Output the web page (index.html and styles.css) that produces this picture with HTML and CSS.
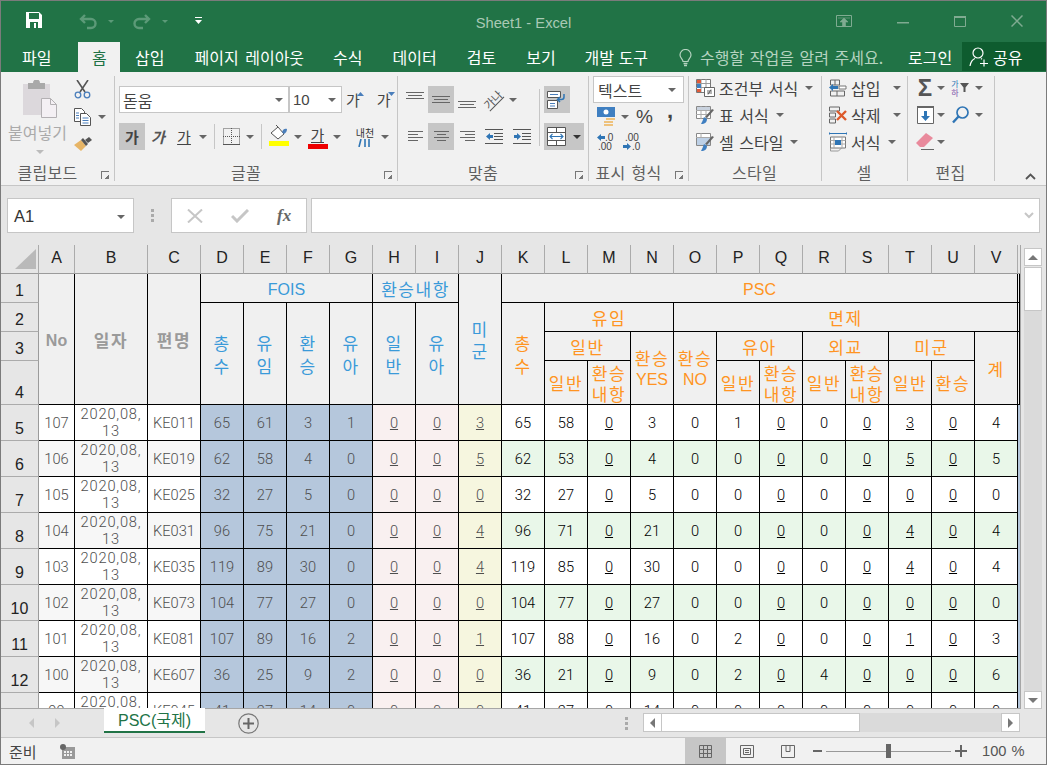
FILE: index.html
```html
<!DOCTYPE html>
<html>
  <head>
    <title>Sheet1 - Excel</title>
    <meta http-equiv="Content-Type" content="text/html; charset=UTF-8"/>
    <link rel="stylesheet" href="styles.css">
  </head>
  <body>
    <div class="window">

      <!-- title bar -->
      <div class="titlebar">
        <div class="qat">
          <svg class="ic-save" width="16" height="16" viewBox="0 0 16 16"><path d="M0 0h13l3 3v13H0z" fill="#fff"/><rect x="3" y="1" width="10" height="6" fill="#217346"/><rect x="4" y="10" width="8" height="6" fill="#217346"/><rect x="8" y="11" width="2" height="5" fill="#fff"/></svg>
          <svg class="ic-undo" width="18" height="16" viewBox="0 0 18 16"><path d="M6 1 2 5l4 4M2 5h10a4.5 4.5 0 0 1 0 9H8" fill="none" stroke="#5c9a78" stroke-width="2.4"/></svg>
          <i class="caret caret-qat"></i>
          <svg class="ic-redo" width="18" height="16" viewBox="0 0 18 16"><path d="M12 1l4 4-4 4M16 5H6a4.5 4.5 0 0 0 0 9h4" fill="none" stroke="#5c9a78" stroke-width="2.4"/></svg>
          <i class="caret caret-qat"></i>
          <svg class="ic-custom" width="7" height="7" viewBox="0 0 7 7"><path d="M0 0h7v1H0zM0 3h7L3.500 7z" fill="#fff"/></svg>
        </div>
        <div class="doc-title">Sheet1 - Excel</div>
        <div class="winbtns">
          <svg width="16" height="12" viewBox="0 0 16 12"><path d="M.5.500h15v11H.500z" fill="none" stroke="#7fab91"/><path d="M2 3h12M8 3l-4 4h2.500v4h3V7H12z" fill="#7fab91" stroke="#7fab91" stroke-width=".6"/></svg>
          <svg width="12" height="12" viewBox="0 0 12 12"><path d="M0 7h12v1.500H0z" fill="#7fab91"/></svg>
          <svg width="12" height="12" viewBox="0 0 12 12"><path d="M.5 1.500h11v10H.500z" fill="none" stroke="#7fab91"/><path d="M0 1h12v2H0z" fill="#7fab91"/></svg>
          <svg width="12" height="12" viewBox="0 0 12 12"><path d="M.5.500l11 11M11.500.500l-11 11" stroke="#7fab91" stroke-width="1.500"/></svg>
        </div>
      </div>

      <!-- ribbon tabs -->
      <div class="tabs">
        <div class="tab tab-file">파일</div>
        <div class="tab active">홈</div>
        <div class="tab">삽입</div>
        <div class="tab">페이지 레이아웃</div>
        <div class="tab tab-tight">수식</div>
        <div class="tab">데이터</div>
        <div class="tab">검토</div>
        <div class="tab">보기</div>
        <div class="tab tab-tight tab-dev">개발 도구</div>
        <svg class="bulb" width="13" height="18" viewBox="0 0 13 18"><path d="M4 12.500C4 10 1 9 1 6a5.500 5.500 0 0 1 11 0c0 3-3 4-3 6.500z" fill="none" stroke="#b5d3c0" stroke-width="1.200"/><path d="M4.500 14.500h4M5 16.500h3" stroke="#b5d3c0" stroke-width="1.400"/></svg>
        <div class="tellme">수행할 작업을 알려 주세요.</div>
        <div class="login">로그인</div>
        <div class="share">
          <svg width="20" height="20" viewBox="0 0 20 20"><circle cx="9" cy="6" r="5" fill="none" stroke="#fff" stroke-width="1.200"/><path d="M1 19c.5-4 3-7 5-7.500M12 11.500l1 .8M11 16.500h8M15 12.500v7" fill="none" stroke="#fff" stroke-width="1.200"/></svg>
          <span>공유</span>
        </div>
      </div>

      <!-- ribbon -->
      <div class="ribbon">

        <div class="group g-clip">
          <div class="g-body flex">
            <div class="paste">
              <svg width="34" height="38" viewBox="0 0 34 38"><path d="M0 4h27v31H0z" fill="#dcd8dc"/><path d="M5 3h5a3.500 3.500 0 0 1 7 0h5v6H5z" fill="#a9a9a9"/><path d="M18.500 18.500h9l6 6v13h-15z" fill="#f4f0f4" stroke="#b3b0b3"/><path d="M27.500 18.500v6h6" fill="none" stroke="#b3b0b3"/></svg>
              <div class="paste-label">붙여넣기</div>
              <i class="caret caret-dim"></i>
            </div>
            <div class="col-small">
              <div class="row">
                <svg width="17" height="19" viewBox="0 0 17 19"><path d="M3 0l8 12M14 0L6 12" stroke="#555" stroke-width="1.600"/><circle cx="4" cy="15" r="2.800" fill="none" stroke="#4a7ebb" stroke-width="1.300"/><circle cx="13" cy="15" r="2.800" fill="none" stroke="#4a7ebb" stroke-width="1.300"/></svg>
              </div>
              <div class="row">
                <svg width="17" height="18" viewBox="0 0 17 18"><path d="M.5.500h7l3 3v10H.500z" fill="#fff" stroke="#555"/><path d="M6.500 5.500h6l4 4v8h-10z" fill="#fff" stroke="#555"/><path d="M2 5h3M2 7.500h3M2 10h3M8.500 10h6M8.500 12.500h6M8.500 15h6" stroke="#4a7ebb"/></svg>
                <i class="caret caret-copy"></i>
              </div>
              <div class="row">
                <svg width="18" height="14" viewBox="0 0 18 14"><path d="M0 8l7-5 5 6-5 5z" fill="#e7b566"/><path d="M7 3l5 6 2-2-5-6z" fill="#555"/><path d="M11 3l4-3 3 3-4 3z" fill="#555"/></svg>
              </div>
            </div>
          </div>
          <div class="g-label g-label-l">클립보드</div>
          <i class="launcher"></i>
        </div>

        <div class="group g-font">
          <div class="g-body g-pad">
            <div class="row">
              <div class="select sel-font"><span>돋움</span><i class="caret"></i></div>
              <div class="select sel-size"><span>10</span><i class="caret"></i></div>
              <div class="grow grow-up">가<svg width="7" height="4" viewBox="0 0 7 4"><path d="M0 4 3.500 0 7 4z" fill="#4a7ebb"/></svg></div>
              <div class="grow grow-down">가<svg width="7" height="4" viewBox="0 0 7 4"><path d="M0 0h7L3.500 4z" fill="#4a7ebb"/></svg></div>
            </div>
            <div class="row">
              <div class="btn w26 on ko"><b>가</b></div>
              <div class="btn w26 ko"><b class="ital">가</b></div>
              <div class="btn w26 ko"><u>가</u></div>
              <div class="drop"><i class="caret"></i></div>
              <div class="vsep-box"><i class="vsep"></i></div>
              <div class="btn w25">
                <svg width="17" height="17" viewBox="0 0 17 17"><path d="M.5.500h16v16H.500z" fill="none" stroke="#555" stroke-dasharray="1 1"/><path d="M8.500 0v17M0 8.500h17" stroke="#555" stroke-dasharray="1 1"/><path d="M0 16.500h17" stroke="#555"/></svg>
              </div>
              <div class="drop"><i class="caret"></i></div>
              <div class="vsep-box"><i class="vsep"></i></div>
              <div class="btn w26 stack">
                <svg width="20" height="15" viewBox="0 0 20 15"><path d="M2 8l7-6 6 7-6 5z" fill="#fff" stroke="#555"/><path d="M9 2 7 0" stroke="#555"/><path d="M15 9c2-1 3-3 3-5-2-1-4 0-5 3z" fill="#4a7ebb"/></svg>
                <i class="bar bar-y"></i>
              </div>
              <div class="drop"><i class="caret"></i></div>
              <div class="btn w27 stack ko"><u class="nou">가</u><i class="bar bar-r"></i></div>
              <div class="drop"><i class="caret"></i></div>
              <div class="btn w28 nc">
                <span>내천</span>
                <svg width="14" height="8" viewBox="0 0 14 8"><path d="M3 0 1 8M7 0v8M11 0v8" stroke="#2f75b5" stroke-width="1.600"/></svg>
              </div>
              <div class="drop"><i class="caret"></i></div>
            </div>
          </div>
          <div class="g-label g-label-l">글꼴</div>
          <i class="launcher"></i>
        </div>

        <div class="group g-align">
          <div class="g-body g-pad g-pad-a">
            <div class="row">
              <div class="btn w26"><svg width="18" height="18" viewBox="0 0 18 18"><path d="M0 1.500h18M2 4.500h14M0 7.500h18" stroke="#666"/></svg></div>
              <div class="btn w26 on"><svg width="18" height="18" viewBox="0 0 18 18"><path d="M0 5.500h18M2 8.500h14M0 11.500h18" stroke="#666"/></svg></div>
              <div class="btn w26"><svg width="18" height="18" viewBox="0 0 18 18"><path d="M0 10.500h18M2 13.500h14M0 16.500h18" stroke="#666"/></svg></div>
              <div class="btn w27"><span class="orient">가나</span></div>
              <div class="drop"><i class="caret"></i></div>
              <i class="vsep sep-wrap"></i>
              <div class="btn w26 on">
                <svg width="20" height="18" viewBox="0 0 20 18"><path d="M.5.500h13v6h-13zM.5 9.500h10v8H.500z" fill="#fff" stroke="#555"/><path d="M3 3.500h8M3 12.500h5M3 15h5" stroke="#4a7ebb"/><path d="M17 3v3a2.500 2.500 0 0 1-2.500 2.500H11M13 6l-2.500 2.500L13 11" fill="none" stroke="#2f75b5" stroke-width="1.500"/></svg>
              </div>
            </div>
            <div class="row">
              <div class="btn w26"><svg width="15" height="11" viewBox="0 0 15 11"><path d="M0 .5h15M0 3.500h10M0 6.500h15M0 9.500h10" stroke="#666"/></svg></div>
              <div class="btn w26 on"><svg width="15" height="11" viewBox="0 0 15 11"><path d="M0 .5h15M3 3.500h9M0 6.500h15M3 9.500h9" stroke="#666"/></svg></div>
              <div class="btn w26"><svg width="15" height="11" viewBox="0 0 15 11"><path d="M0 .5h15M5 3.500h10M0 6.500h15M5 9.500h10" stroke="#666"/></svg></div>
              <div class="btn w28"><svg width="18" height="15" viewBox="0 0 18 15"><path d="M0 .5h18M9 4.500h9M9 7.500h9M9 10.500h9M0 14.500h18" stroke="#555"/><path d="M1 7.500 5 4v2h3v3H5v2z" fill="#2f75b5"/></svg></div>
              <div class="btn w28"><svg width="18" height="15" viewBox="0 0 18 15"><path d="M0 .5h18M9 4.500h9M9 7.500h9M9 10.500h9M0 14.500h18" stroke="#555"/><path d="M8 7.500 4 4v2H1v3h3v2z" fill="#2f75b5"/></svg></div>
              <i class="vsep sep-merge"></i>
              <div class="btn w40 on merge">
                <svg width="19" height="19" viewBox="0 0 19 19"><path d="M.5.500h18v18H.500z" fill="#fff" stroke="#555"/><path d="M0 5.500h19M0 13.500h19M9.500 0v5M9.500 14v5" stroke="#555"/><path d="M3 9.500h13M5.500 7 3 9.500 5.500 12M13.500 7 16 9.500 13.500 12" fill="none" stroke="#2f75b5" stroke-width="1.100"/></svg>
                <i class="caret caret-dark"></i>
              </div>
            </div>
          </div>
          <div class="g-label g-label-l">맞춤</div>
          <i class="launcher"></i>
        </div>

        <div class="group g-num">
          <div class="g-body">
            <div class="select sel-num"><span>텍스트</span><i class="caret"></i></div>
            <div class="row">
              <div class="btn w26">
                <svg width="19" height="20" viewBox="0 0 19 20"><path d="M0 0h18v10H0z" fill="#3f7fc1"/><circle cx="9" cy="5" r="2.500" fill="#fff"/><path d="M9 11h9v2H9zM7 14h9v2H7zM7 17h9v2H7z" fill="#eec27d"/></svg>
              </div>
              <div class="drop"><i class="caret"></i></div>
              <div class="btn w27 pct">%</div>
              <div class="btn w24 comma">,</div>
            </div>
            <div class="row row-dec">
              <div class="btn w24">
                <svg width="18" height="18" viewBox="0 0 18 18"><path d="M1 4.500 5 1v2h4v3H5v2z" fill="#2f75b5"/><text x="9" y="8" class="dec">.0</text><text x="2" y="17" class="dec">.00</text></svg>
              </div>
              <div class="btn w28">
                <svg width="20" height="18" viewBox="0 0 20 18"><text x="4" y="8" class="dec">.00</text><path d="M9 13.500 5 10v2H1v3h4v2z" transform="translate(1 0)" fill="#2f75b5"/><text x="11" y="17" class="dec">.0</text></svg>
              </div>
            </div>
          </div>
          <div class="g-label g-label-l">표시 형식</div>
          <i class="launcher"></i>
        </div>

        <div class="group g-style">
          <div class="g-body g-rows">
            <div class="row gap4">
              <svg width="19" height="18" viewBox="0 0 19 18"><path d="M.5.500h14v13H.500z" fill="#fff" stroke="#777"/><path d="M0 4.500h14M0 8.500h14M5 0v13M10 0v13" stroke="#999"/><path d="M1 1h4v3H1z" fill="#e05a3a"/><path d="M1 5h4v4H1z" fill="#3f7fc1"/><path d="M1 10h4v3H1z" fill="#e05a3a"/><path d="M8.500 8.500h10v9h-10z" fill="#fff" stroke="#666"/><path d="M11 12h5M11 14h5M15 10.500l-3 5" stroke="#444" stroke-width=".8"/></svg>
              <span>조건부 서식</span><i class="caret caret-t"></i>
            </div>
            <div class="row gap4">
              <svg width="19" height="18" viewBox="0 0 19 18"><path d="M.5.500h14v12H.500z" fill="#fff" stroke="#888"/><path d="M0 4.500h14M0 8.500h14M5 0v13M10 0v13" stroke="#aaa"/><path d="M1 1h13v3H1z" fill="#c9d2de"/><path d="M11 12l7-8-2-1-7 8z" fill="#666"/><path d="M5 18c4 0 6-2 6-5l-3-2c-1 3-2 5-3 7z" fill="#3f7fc1"/></svg>
              <span>표 서식</span><i class="caret caret-t"></i>
            </div>
            <div class="row gap4">
              <svg width="19" height="18" viewBox="0 0 19 18"><path d="M.5.500h14v12H.500z" fill="#fff" stroke="#888"/><path d="M0 4.500h14M5 0v4" stroke="#aaa"/><path d="M1 5h13v7H1z" fill="#bdd0e6"/><path d="M11 12l7-8-2-1-7 8z" fill="#666"/><path d="M5 18c4 0 6-2 6-5l-3-2c-1 3-2 5-3 7z" fill="#3f7fc1"/></svg>
              <span>셀 스타일</span><i class="caret caret-t"></i>
            </div>
          </div>
          <div class="g-label">스타일</div>
        </div>

        <div class="group g-cell">
          <div class="g-body g-rows">
            <div class="row gap4">
              <svg width="18" height="18" viewBox="0 0 18 18"><path d="M1.500 1h9v5h-9zM1.500 12h14v5h-14zM8 12v5M6 1v5" fill="none" stroke="#666"/><path d="M10 7h7v3h-7z" fill="#fff" stroke="#777"/><path d="M0 8.500 4 5v2h5v3H4v2z" fill="#2f75b5"/></svg>
              <span class="cell-txt">삽입</span><i class="caret"></i>
            </div>
            <div class="row gap4">
              <svg width="18" height="18" viewBox="0 0 18 18"><path d="M.5 1h10v4H.500zM.5 7h6v4h-6zM.5 13h6v4h-6z" fill="none" stroke="#666"/><path d="M8 5l9 9M17 5l-9 9" stroke="#dd5a2b" stroke-width="2.400"/></svg>
              <span class="cell-txt">삭제</span><i class="caret"></i>
            </div>
            <div class="row gap4">
              <svg width="18" height="20" viewBox="0 0 18 20"><path d="M0 1.500h18M0 0v3M18 0v3" stroke="#2f75b5"/><path d="M1.500 5h15v11h-15z" fill="#fff" stroke="#777"/><path d="M1.500 8.500h15M1.500 12h15M5 5v11M13 5v11" stroke="#aaa"/><path d="M6 8h6v5H6z" fill="#2f75b5"/><path d="M1.500 16v3h8l3-3" fill="none" stroke="#999"/></svg>
              <span class="cell-txt cell-fmt">서식</span><i class="caret"></i>
            </div>
          </div>
          <div class="g-label">셀</div>
        </div>

        <div class="group g-edit">
          <div class="g-body g-rows">
            <div class="row">
              <div class="btn w20 sigma">Σ</div>
              <div class="drop"><i class="caret"></i></div>
              <div class="btn w26 sort">
                <span class="sort-txt"><em>가</em><em class="purple">하</em></span>
                <svg width="9" height="9" viewBox="0 0 9 9"><path d="M0 0h9L5.500 4.500V9h-2V4.500z" fill="#555"/></svg>
              </div>
              <div class="drop"><i class="caret"></i></div>
            </div>
            <div class="row">
              <div class="btn w20">
                <svg width="17" height="18" viewBox="0 0 17 18"><path d="M.5.500h16v17H.500z" fill="#fff" stroke="#666"/><path d="M0 0h17v2H0z" fill="#666"/><path d="M7 5h3v5h3l-4.500 5L4 10h3z" fill="#2f75b5"/></svg>
              </div>
              <div class="drop"><i class="caret"></i></div>
              <div class="btn w26">
                <svg width="17" height="18" viewBox="0 0 17 18"><circle cx="10.500" cy="6.500" r="5.500" fill="none" stroke="#2f75b5" stroke-width="1.700"/><path d="M6.500 10.500 1 16.500" stroke="#2f75b5" stroke-width="2.400"/></svg>
              </div>
              <div class="drop"><i class="caret"></i></div>
            </div>
            <div class="row">
              <div class="btn w20">
                <svg width="18" height="17" viewBox="0 0 18 17"><path d="M0 10 10 0l7 5-9 9H4z" fill="#e98a9c"/><path d="M5 16.500h13" stroke="#666"/></svg>
              </div>
              <div class="drop"><i class="caret"></i></div>
            </div>
          </div>
          <div class="g-label">편집</div>
        </div>

        <svg class="collapse" width="11" height="7" viewBox="0 0 11 7"><path d="M1 6l4.500-4.500L10 6" fill="none" stroke="#555" stroke-width="1.800"/></svg>
      </div>

      <!-- formula bar -->
      <div class="formula">
        <div class="namebox"><span>A1</span><i class="caret"></i></div>
        <div class="dots"><i></i><i></i><i></i></div>
        <div class="fxbox">
          <svg width="16" height="14" viewBox="0 0 16 14"><path d="M1 .5l14 13M15 .5l-14 13" stroke="#c6c6c6" stroke-width="2"/></svg>
          <svg width="18" height="14" viewBox="0 0 18 14"><path d="M1 7l5 5L17 1" fill="none" stroke="#c6c6c6" stroke-width="3"/></svg>
          <span class="fx">fx</span>
        </div>
        <div class="finput">
          <svg width="10" height="7" viewBox="0 0 10 7"><path d="M1 1l4 4 4-4" fill="none" stroke="#c6c6c6" stroke-width="2"/></svg>
        </div>
      </div>

      <!-- sheet -->
      <div class="sheetwrap">
        <div class="sheet">
          <table>
            <colgroup>
              <col class="c-rh"><col class="c-a"><col class="c-b"><col class="c-c">
              <col class="c"><col class="c"><col class="c"><col class="c"><col class="c"><col class="c"><col class="c">
              <col class="c"><col class="c"><col class="c"><col class="c"><col class="c"><col class="c"><col class="c">
              <col class="c"><col class="c"><col class="c"><col class="c"><col class="c">
              <col class="c-w">
            </colgroup>
            <thead>
              <tr class="r-head">
                <th class="corner"><svg width="38" height="28" viewBox="0 0 38 28"><path d="M14 24 35 4v20z" fill="#b9b9b9"/></svg></th>
                <th class="ch">A</th><th class="ch">B</th><th class="ch">C</th><th class="ch">D</th><th class="ch">E</th><th class="ch">F</th><th class="ch">G</th><th class="ch">H</th><th class="ch">I</th><th class="ch">J</th><th class="ch">K</th><th class="ch">L</th><th class="ch">M</th><th class="ch">N</th><th class="ch">O</th><th class="ch">P</th><th class="ch">Q</th><th class="ch">R</th><th class="ch">S</th><th class="ch">T</th><th class="ch">U</th><th class="ch">V</th><th class="ch ch-w"></th>
              </tr>
              <tr class="r29">
                <th class="rh">1</th>
                <th class="hd gray" rowspan="4"><span class="lat">No</span></th>
                <th class="hd gray" rowspan="4">일자</th>
                <th class="hd gray" rowspan="4">편명</th>
                <th class="hd blue" colspan="4"><span class="lat">FOIS</span></th>
                <th class="hd blue" colspan="2">환승내항</th>
                <th class="hd blue" rowspan="4">미<br>군</th>
                <th class="hd orange" colspan="12"><span class="lat">PSC</span></th>
                <th></th>
              </tr>
              <tr class="r29">
                <th class="rh">2</th>
                <th class="hd blue" rowspan="3">총<br>수</th>
                <th class="hd blue" rowspan="3">유<br>임</th>
                <th class="hd blue" rowspan="3">환<br>승</th>
                <th class="hd blue" rowspan="3">유<br>아</th>
                <th class="hd blue" rowspan="3">일<br>반</th>
                <th class="hd blue" rowspan="3">유<br>아</th>
                <th class="hd orange" rowspan="3">총<br>수</th>
                <th class="hd orange" colspan="3">유임</th>
                <th class="hd orange" colspan="8">면제</th>
                <th></th>
              </tr>
              <tr class="r29">
                <th class="rh">3</th>
                <th class="hd orange" colspan="2">일반</th>
                <th class="hd orange tight" rowspan="2">환승<br><span class="lat">YES</span></th>
                <th class="hd orange tight" rowspan="2">환승<br><span class="lat">NO</span></th>
                <th class="hd orange" colspan="2">유아</th>
                <th class="hd orange" colspan="2">외교</th>
                <th class="hd orange" colspan="2">미군</th>
                <th class="hd orange" rowspan="2">계</th>
                <th class="nob"></th>
              </tr>
              <tr class="r44">
                <th class="rh">4</th>
                <th class="hd orange">일반</th>
                <th class="hd orange tight">환승<br>내항</th>
                <th class="hd orange">일반</th>
                <th class="hd orange tight">환승<br>내항</th>
                <th class="hd orange">일반</th>
                <th class="hd orange tight">환승<br>내항</th>
                <th class="hd orange">일반</th>
                <th class="hd orange">환승</th>
                <th></th>
              </tr>
            </thead>
            <tbody>
              <tr><th class="rh">5</th><td>107</td><td class="date">2020,08,<br>13</td><td>KE011</td><td>65</td><td>61</td><td>3</td><td>1</td><td><u>0</u></td><td><u>0</u></td><td><u>3</u></td><td>65</td><td>58</td><td><u>0</u></td><td>3</td><td>0</td><td>1</td><td><u>0</u></td><td>0</td><td><u>0</u></td><td><u>3</u></td><td><u>0</u></td><td>4</td><td></td></tr>
              <tr class="alt"><th class="rh">6</th><td>106</td><td class="date">2020,08,<br>13</td><td>KE019</td><td>62</td><td>58</td><td>4</td><td>0</td><td><u>0</u></td><td><u>0</u></td><td><u>5</u></td><td>62</td><td>53</td><td><u>0</u></td><td>4</td><td>0</td><td>0</td><td><u>0</u></td><td>0</td><td><u>0</u></td><td><u>5</u></td><td><u>0</u></td><td>5</td><td></td></tr>
              <tr><th class="rh">7</th><td>105</td><td class="date">2020,08,<br>13</td><td>KE025</td><td>32</td><td>27</td><td>5</td><td>0</td><td><u>0</u></td><td><u>0</u></td><td><u>0</u></td><td>32</td><td>27</td><td><u>0</u></td><td>5</td><td>0</td><td>0</td><td><u>0</u></td><td>0</td><td><u>0</u></td><td><u>0</u></td><td><u>0</u></td><td>0</td><td></td></tr>
              <tr class="alt"><th class="rh">8</th><td>104</td><td class="date">2020,08,<br>13</td><td>KE031</td><td>96</td><td>75</td><td>21</td><td>0</td><td><u>0</u></td><td><u>0</u></td><td><u>4</u></td><td>96</td><td>71</td><td><u>0</u></td><td>21</td><td>0</td><td>0</td><td><u>0</u></td><td>0</td><td><u>0</u></td><td><u>4</u></td><td><u>0</u></td><td>4</td><td></td></tr>
              <tr><th class="rh">9</th><td>103</td><td class="date">2020,08,<br>13</td><td>KE035</td><td>119</td><td>89</td><td>30</td><td>0</td><td><u>0</u></td><td><u>0</u></td><td><u>4</u></td><td>119</td><td>85</td><td><u>0</u></td><td>30</td><td>0</td><td>0</td><td><u>0</u></td><td>0</td><td><u>0</u></td><td><u>4</u></td><td><u>0</u></td><td>4</td><td></td></tr>
              <tr class="alt"><th class="rh">10</th><td>102</td><td class="date">2020,08,<br>13</td><td>KE073</td><td>104</td><td>77</td><td>27</td><td>0</td><td><u>0</u></td><td><u>0</u></td><td><u>0</u></td><td>104</td><td>77</td><td><u>0</u></td><td>27</td><td>0</td><td>0</td><td><u>0</u></td><td>0</td><td><u>0</u></td><td><u>0</u></td><td><u>0</u></td><td>0</td><td></td></tr>
              <tr><th class="rh">11</th><td>101</td><td class="date">2020,08,<br>13</td><td>KE081</td><td>107</td><td>89</td><td>16</td><td>2</td><td><u>0</u></td><td><u>0</u></td><td><u>1</u></td><td>107</td><td>88</td><td><u>0</u></td><td>16</td><td>0</td><td>2</td><td><u>0</u></td><td>0</td><td><u>0</u></td><td><u>1</u></td><td><u>0</u></td><td>3</td><td></td></tr>
              <tr class="alt"><th class="rh">12</th><td>100</td><td class="date">2020,08,<br>13</td><td>KE607</td><td>36</td><td>25</td><td>9</td><td>2</td><td><u>0</u></td><td><u>0</u></td><td><u>0</u></td><td>36</td><td>21</td><td><u>0</u></td><td>9</td><td>0</td><td>2</td><td><u>0</u></td><td>4</td><td><u>0</u></td><td><u>0</u></td><td><u>0</u></td><td>6</td><td></td></tr>
              <tr><th class="rh">13</th><td>99</td><td class="date">2020,08,<br>13</td><td>KE045</td><td>41</td><td>27</td><td>14</td><td>0</td><td><u>0</u></td><td><u>0</u></td><td><u>0</u></td><td>41</td><td>27</td><td><u>0</u></td><td>14</td><td>0</td><td>0</td><td><u>0</u></td><td>0</td><td><u>0</u></td><td><u>0</u></td><td><u>0</u></td><td>0</td><td></td></tr>
            </tbody>
          </table>
        </div>
        <div class="vscroll">
          <div class="sb-btn"><i class="tri tri-up"></i></div>
          <div class="sb-thumb"></div>
          <div class="sb-track"></div>
          <div class="sb-btn"><i class="tri tri-down"></i></div>
        </div>
      </div>

      <!-- sheet tabs -->
      <div class="tabbar">
        <div class="navs"><i class="nav nav-l"></i><i class="nav nav-r"></i></div>
        <div class="sheet-tab">PSC(국제)</div>
        <svg class="addsheet" width="21" height="21" viewBox="0 0 21 21"><circle cx="10.500" cy="10.500" r="9.700" fill="none" stroke="#777" stroke-width="1.200"/><path d="M10.500 5v11M5 10.500h11" stroke="#666" stroke-width="2"/></svg>
        <div class="dots dots-h"><i></i><i></i><i></i></div>
        <div class="hscroll">
          <div class="hb-btn"><i class="tri tri-left"></i></div>
          <div class="hb-thumb"></div>
          <div class="hb-track"></div>
          <div class="hb-btn"><i class="tri tri-right"></i></div>
        </div>
      </div>

      <!-- status bar -->
      <div class="status">
        <span class="ready">준비</span>
        <svg class="macro" width="15" height="15" viewBox="0 0 15 15"><path d="M2 3h13v12H2z" fill="#999"/><path d="M4 7h2v2H4zM7 7h2v2H7zM10 7h2v2h-2zM4 10h2v2H4zM7 10h2v2H7zM10 10h2v2h-2z" fill="#f1f1f1"/><circle cx="3" cy="3" r="3" fill="#666"/></svg>
        <div class="views">
          <div class="view on"><svg width="13" height="13" viewBox="0 0 13 13"><path d="M.5.500h12v12H.500zM4.500 0v13M8.500 0v13M0 4.500h13M0 8.500h13" fill="none" stroke="#666"/></svg></div>
          <div class="view"><svg width="14" height="13" viewBox="0 0 14 13"><path d="M.5.500h13v12H.500z" fill="none" stroke="#666"/><path d="M3.500 3.500h7v6h-7zM5 5.500h4M5 7.500h4" fill="none" stroke="#666"/></svg></div>
          <div class="view"><svg width="14" height="13" viewBox="0 0 14 13"><path d="M.5.500h13v12H.500zM5 .5v6h4v-6" fill="none" stroke="#666"/></svg></div>
        </div>
        <div class="zoomer">
          <i class="z-minus"></i>
          <div class="z-track"><i class="z-thumb"></i></div>
          <svg width="12" height="12" viewBox="0 0 12 12"><path d="M0 5h12v2H0zM5 0h2v12H5z" fill="#666"/></svg>
        </div>
        <span class="zoomval">100 %</span>
      </div>
    </div>
  </body>
</html>
```
FILE: styles.css
```css
* {
  box-sizing: border-box;
}
body {
  margin: 0;
  font-family: 'Liberation Sans', 'Noto Sans CJK KR', sans-serif;
  background: #f1f1f1;
}
.window {
  width: 1047px;
  height: 765px;
  overflow: hidden;
  display: flex;
  flex-direction: column;
  border: 1px solid #7b7b7b;
}
.flex {
  display: flex;
}

/* carets */
.caret {
  display: block;
  flex: none;
  width: 0;
  height: 0;
  border-left: 4px solid transparent;
  border-right: 4px solid transparent;
  border-top: 4px solid #666;
}
.caret-qat {
  border-left-width: 3px;
  border-right-width: 3px;
  border-top: 3px solid #5c9a78;
}
.caret-dim {
  border-top-color: #bbb;
  margin: 7px auto 0;
}
.caret-dark {
  border-top-color: #333;
}

/* title bar */
.titlebar {
  height: 41px;
  flex: none;
  background: #217346;
  display: grid;
  grid-template-columns: 1fr auto 1fr;
  align-items: center;
}
.qat {
  display: flex;
  align-items: center;
}
.ic-save {
  margin-left: 25px;
  margin-top: -3px;
}
.ic-undo {
  margin-left: 37px;
}
.ic-undo + .caret {
  margin-left: 11px;
}
.ic-redo {
  margin-left: 19px;
}
.ic-redo + .caret {
  margin-left: 11px;
}
.ic-custom {
  margin-left: 27px;
  margin-top: -3px;
}
.doc-title {
  color: #a9c9b5;
  font-size: 14.700px;
  padding-top: 3px;
}
.winbtns {
  display: flex;
  justify-content: flex-end;
  align-items: center;
  padding-right: 23px;
  gap: 45px;
  margin-top: -2px;
}

/* tabs */
.tabs {
  height: 30px;
  flex: none;
  background: #217346;
  color: #fff;
  display: flex;
  align-items: stretch;
  font-size: 16px;
  line-height: 30px;
  word-spacing: 3px;
  font-family: 'Noto Sans CJK KR', sans-serif;
  white-space: nowrap;
}
.tab {
  padding: 0 15px;
  flex: none;
}
.tab-tight {
  margin-left: -1px;
}
.tab-dev {
  word-spacing: 1px;
}
.tab-file {
  padding: 0 0 0 21px;
  width: 77px;
}
.tab.active {
  background: #f1f1f1;
  color: #217346;
  padding: 0 14px;
  width: 42px;
}
.bulb {
  margin: 7px 0 0 16px;
  flex: none;
}
.tellme {
  margin-left: 8px;
  color: #b5d3c0;
  font-size: 16px;
  word-spacing: 2px;
  width: 208px;
  flex: none;
}
.login {
  width: 54px;
  flex: none;
}
.share {
  width: 85px;
  height: 29px;
  flex: none;
  background: #0e5c2f;
  display: flex;
  align-items: center;
  padding-left: 7px;
  gap: 4px;
}

/* ribbon */
.ribbon {
  height: 114px;
  flex: none;
  background: #f1f1f1;
  border-bottom: 1px solid #c6c6c6;
  padding-top: 4px;
  display: flex;
  align-items: flex-start;
  font-family: 'Noto Sans CJK KR', sans-serif;
  font-size: 16px;
  color: #444;
  word-spacing: 2px;
}
.group {
  position: relative;
  height: 105px;
  border-right: 1px solid #c6c6c6;
  display: flex;
  flex-direction: column;
  flex: none;
}
.g-clip { width: 114px; }
.g-font { width: 283px; }
.g-align { width: 191px; }
.g-num { width: 100px; }
.g-style { width: 133px; }
.g-cell { width: 86px; }
.g-edit { width: 87px; }
.g-body {
  height: 86px;
  flex: none;
}
.g-rows {
  margin-top: -2px;
  height: 88px;
}
.g-pad {
  padding: 10px 0 0 4px;
  display: flex;
  flex-direction: column;
  gap: 10px;
}
.g-label {
  text-align: center;
  line-height: 21px;
  color: #5f5f5f;
  letter-spacing: .3px;
  padding-right: 1px;
  white-space: nowrap;
}
.g-label-l {
  padding-right: 20px;
}
.launcher {
  position: absolute;
  right: 5px;
  bottom: 2px;
  width: 8px;
  height: 8px;
  border-left: 1px solid #777;
  border-top: 1px solid #777;
  background: linear-gradient(135deg, transparent 45%, #777 45%, #777 100%) no-repeat 3px 3px / 4px 4px;
}
.row {
  display: flex;
  align-items: center;
  height: 27px;
}
.gap4 {
  gap: 4px;
}
.btn {
  height: 27px;
  display: flex;
  align-items: center;
  justify-content: center;
  flex: none;
}
.btn.on {
  background: #c6c6c6;
}
.w20 { width: 20px; }
.w24 { width: 24px; }
.w25 { width: 25px; }
.w26 { width: 26px; }
.w27 { width: 27px; }
.w28 { width: 28px; }
.w40 { width: 40px; }
.drop {
  width: 12px;
  height: 27px;
  display: flex;
  align-items: center;
  justify-content: center;
  flex: none;
}
.vsep-box {
  width: 10px;
  display: flex;
  justify-content: center;
  flex: none;
}
.vsep {
  display: block;
  width: 1px;
  height: 25px;
  background: #c6c6c6;
  flex: none;
}
.sep-wrap {
  margin: 3px 4px -30px 20px;
  height: 57px;
  align-self: flex-start;
}
.sep-merge {
  margin: 0 4px 0 3px;
  visibility: hidden;
}

/* clipboard */
.paste {
  width: 73px;
  padding: 4px 0 0 0;
  text-align: center;
}
.paste svg {
  display: block;
  margin: 0 0 0 22px;
}
.paste-label {
  color: #aaa;
  margin-top: 2px;
  line-height: 24px;
}
.col-small .row:nth-child(2) .caret {
  margin-left: 7px;
}
.paste-label + .caret {
  margin-top: 6px;
  margin-left: 35px;
}

/* font */
.select {
  height: 27px;
  background: #fff;
  border: 1px solid #c6c6c6;
  display: flex;
  align-items: center;
  justify-content: space-between;
  padding: 0 5px 0 3px;
  flex: none;
}
.sel-font {
  width: 170px;
}
.sel-size {
  width: 53px;
  font-family: 'Liberation Sans', sans-serif;
  font-size: 15px;
}
.grow {
  display: flex;
  align-items: flex-start;
  flex: none;
  font-size: 15px;
  line-height: 24px;
}
.grow svg {
  margin: 4px 0 0 -3px;
}
.grow-up {
  margin-left: 4px;
}
.grow-down {
  margin-left: 13px;
}
.ko {
  font-size: 15px;
}
.ital {
  font-weight: bold;
  font-style: italic;
  color: #555;
}
.stack {
  flex-direction: column;
  justify-content: flex-start;
  padding-top: 2px;
}
.nou {
  text-decoration: none;
  line-height: 19px;
  border-bottom: 1px solid #444;
  height: 18px;
}
.bar {
  display: block;
  width: 20px;
  height: 5px;
  margin-top: 1px;
}
.bar-y {
  background: #ffff00;
}
.bar-r {
  background: #ee0000;
}
.nc {
  flex-direction: column;
  margin-left: 8px;
  gap: 1px;
  font-size: 10px;
  line-height: 11px;
  color: #333;
}
.nc svg {
  display: block;
}

/* alignment */
.orient {
  display: block;
  font-size: 11px;
  line-height: 11px;
  transform: rotate(-45deg);
  border-bottom: 1px solid #555;
  white-space: nowrap;
  color: #555;
}
.merge {
  justify-content: flex-start;
  padding-left: 3px;
  gap: 7px;
}

/* number */
.sel-num {
  width: 91px;
  margin-left: 4px;
  padding: 0 7px 0 4px;
  word-spacing: 0;
}
.g-num .row {
  padding-left: 4px;
}
.row-dec {
  height: 23px;
}
.row-dec .btn {
  height: 23px;
}
.pct {
  font-family: 'Liberation Sans', sans-serif;
  font-size: 19px;
}
.comma {
  font-family: 'Liberation Sans', sans-serif;
  font-size: 22px;
  font-weight: bold;
  line-height: 16px;
  align-items: flex-start;
}
.dec {
  font-family: 'Liberation Sans', sans-serif;
  font-size: 10px;
  fill: #444;
}

/* styles, cells, editing */
.g-style .row {
  padding-left: 7px;
  white-space: nowrap;
}
.caret-t {
  margin-left: 3px;
}
.g-cell .row {
  padding-left: 7px;
}
.cell-txt {
  width: 38px;
}
.cell-fmt {
  width: 33px;
}
.g-edit .row {
  padding-left: 7px;
}
.sigma {
  font-family: 'Liberation Sans', sans-serif;
  font-size: 24px;
  font-weight: bold;
  color: #555;
}
.sort {
  gap: 1px;
}
.sort-txt {
  display: flex;
  flex-direction: column;
  font-size: 8px;
  line-height: 9px;
  color: #2f75b5;
}
.sort-txt em {
  font-style: normal;
}
.purple {
  color: #7a4fa8;
}
.collapse {
  margin: 97px 0 0 30px;
  flex: none;
}

/* formula bar */
.formula {
  height: 59px;
  flex: none;
  background: #e6e6e6;
  padding: 12px 0 0 6px;
  display: flex;
  align-items: flex-start;
}
.namebox {
  width: 127px;
  height: 35px;
  background: #fff;
  border: 1px solid #c6c6c6;
  display: flex;
  align-items: center;
  justify-content: space-between;
  padding: 2px 8px 0 6px;
  font-size: 16.500px;
  color: #333;
}
.dots {
  width: 37px;
  height: 35px;
  display: flex;
  flex-direction: column;
  align-items: center;
  justify-content: center;
  gap: 2px;
}
.dots i {
  display: block;
  width: 3px;
  height: 3px;
  background: #aaa;
}
.fxbox {
  width: 136px;
  height: 35px;
  background: #fff;
  border: 1px solid #c6c6c6;
  display: flex;
  align-items: center;
  padding-left: 15px;
  gap: 28px;
}
.fx {
  font-family: 'Liberation Serif', serif;
  font-style: italic;
  font-weight: bold;
  font-size: 17px;
  color: #666;
}
.finput {
  width: 729px;
  height: 35px;
  margin-left: 4px;
  background: #fff;
  border: 1px solid #c6c6c6;
  display: flex;
  align-items: center;
  justify-content: flex-end;
  padding-right: 5px;
}

/* sheet */
.sheetwrap {
  height: 464px;
  flex: none;
  display: flex;
  background: #e6e6e6;
}
.sheet {
  width: 1020px;
  flex: none;
  overflow: hidden;
  border-right: 1px solid #a6a6a6;
  border-bottom: 1px solid #a6a6a6;
}
table {
  table-layout: fixed;
  width: 1019px;
  border-collapse: separate;
  border-spacing: 0;
  background: #f0f0f0;
}
.c-rh { width: 38px; }
.c-a { width: 36px; }
.c-b { width: 73px; }
.c-c { width: 53px; }
.c { width: 43px; }
.c-w { width: 2px; }
th, td {
  padding: 0;
  overflow: hidden;
  text-align: center;
  border-right: 1px solid #000;
  border-bottom: 1px solid #000;
}
.r-head { height: 29px; }
.r29 { height: 29px; }
.r44 { height: 44px; }
tbody tr { height: 36px; }
.corner, .ch {
  background: #e6e6e6;
  border-right: 1px solid #ababab;
  border-bottom: 1px solid #9b9b9b;
  font-weight: normal;
  font-size: 16px;
  color: #222;
  padding-bottom: 2px;
}
.corner {
  padding: 0;
}
.corner svg {
  display: block;
}
.ch-w {
  border-right: 0;
}
.rh {
  background: #e6e6e6;
  border-right: 1px solid #9b9b9b;
  border-bottom: 1px solid #ababab;
  vertical-align: bottom;
  font-weight: normal;
  font-size: 16px;
  line-height: 18px;
  color: #222;
  padding-bottom: 2px;
}
.hd {
  font-family: 'Noto Sans CJK KR', sans-serif;
  font-size: 17px;
  line-height: 22.500px;
  letter-spacing: 1.500px;
  font-weight: normal;
  padding-top: 2px;
}
.hd.tight {
  line-height: 20.500px;
}
.hd.gray {
  color: #9a9a9a;
  font-weight: bold;
}
.blue { color: #3a9ad9; }
.orange { color: #ff9422; }
.lat {
  font-family: 'Liberation Sans', sans-serif;
  font-size: 16px;
  letter-spacing: 0;
}
th.nob {
  border-bottom: 0;
}
td {
  font-family: Roboto, 'Liberation Sans', sans-serif;
  font-weight: 300;
  font-size: 14.670px;
  line-height: 17.500px;
  color: #4f4f4f;
  background: #fff;
  padding-top: 3px;
}
td.date {
  letter-spacing: .8px;
  line-height: 17px;
  padding-top: 1px;
}
tbody tr.alt td {
  background: #f7f7f7;
}
tbody td:nth-child(n+5):nth-child(-n+8),
tbody tr.alt td:nth-child(n+5):nth-child(-n+8) {
  background: #b5c7dc;
}
tbody td:nth-child(n+9):nth-child(-n+10),
tbody tr.alt td:nth-child(n+9):nth-child(-n+10) {
  background: #f9f0f0;
}
tbody td:nth-child(11),
tbody tr.alt td:nth-child(11) {
  background: #f6f6df;
}
tbody td:nth-child(n+12) {
  color: #000;
}
tbody tr.alt td:nth-child(n+12) {
  background: #e9f7e9;
}
tbody td:nth-child(24),
tbody tr.alt td:nth-child(24) {
  background: #b5c7dc;
  border-right: 0;
  border-bottom: 0;
}

/* scrollbars */
.vscroll {
  width: 25px;
  flex: none;
  padding: 3px 0 0 3px;
  display: flex;
  flex-direction: column;
}
.sb-btn {
  width: 18px;
  height: 18px;
  flex: none;
  background: #fff;
  border: 1px solid #c6c6c6;
  display: flex;
  align-items: center;
  justify-content: center;
}
.sb-thumb {
  width: 18px;
  height: 44px;
  flex: none;
  margin-top: 1px;
  background: #fff;
  border: 1px solid #c6c6c6;
}
.sb-track {
  width: 18px;
  flex: 1;
  background: #dadada;
}
.tri {
  display: block;
  width: 0;
  height: 0;
  border: 4px solid transparent;
}
.tri-up {
  border-width: 0 5px 5px;
  border-bottom-color: #777;
}
.tri-down {
  border-width: 5px 5px 0;
  border-top-color: #777;
}
.tri-left {
  border-width: 5px 5px 5px 0;
  border-right-color: #777;
}
.tri-right {
  border-width: 5px 0 5px 5px;
  border-left-color: #777;
}

/* sheet tabs */
.tabbar {
  height: 29px;
  flex: none;
  background: #e6e6e6;
  border-bottom: 1px solid #c6c6c6;
  display: flex;
  align-items: flex-start;
}
.navs {
  width: 103px;
  height: 28px;
  display: flex;
  align-items: center;
  padding-left: 28px;
  gap: 21px;
}
.nav {
  display: block;
  width: 0;
  height: 0;
  border: 5px solid transparent;
}
.nav-l {
  border-width: 5px 5px 5px 0;
  border-right-color: #c6c6c6;
}
.nav-r {
  border-width: 5px 0 5px 5px;
  border-left-color: #c6c6c6;
}
.sheet-tab {
  width: 101px;
  height: 25px;
  margin-top: -1px;
  background: #fff;
  border-bottom: 2px solid #217346;
  color: #217346;
  text-align: center;
  font-size: 16px;
  line-height: 25px;
  position: relative;
}
.addsheet {
  margin: 4px 0 0 33px;
  flex: none;
}
.dots-h {
  width: 16px;
  height: 28px;
  margin-left: 359px;
  flex: none;
}
.hscroll {
  display: flex;
  width: 377px;
  height: 19px;
  margin: 4px 0 0 9px;
  flex: none;
}
.hb-btn {
  width: 19px;
  flex: none;
  background: #fff;
  border: 1px solid #c6c6c6;
  display: flex;
  align-items: center;
  justify-content: center;
}
.hb-thumb {
  width: 198px;
  flex: none;
  background: #fff;
  border: 1px solid #c6c6c6;
  border-left-width: 0;
}
.hb-track {
  flex: 1;
  background: #dadada;
}

/* status bar */
.status {
  height: 26px;
  flex: none;
  background: #f1f1f1;
  display: flex;
  align-items: center;
  color: #444;
}
.ready {
  font-family: 'Noto Sans CJK KR', sans-serif;
  font-size: 15px;
  margin-left: 8px;
  width: 51px;
}
.macro {
  flex: none;
}
.views {
  display: flex;
  height: 26px;
  margin-left: 610px;
}
.view {
  width: 41px;
  display: flex;
  align-items: center;
  justify-content: center;
}
.view.on {
  background: #c6c6c6;
}
.zoomer {
  display: flex;
  align-items: center;
  margin-left: 5px;
}
.z-minus {
  display: block;
  width: 9px;
  height: 2px;
  background: #666;
}
.z-track {
  width: 125px;
  height: 1px;
  margin: 0 4px 0 4px;
  background: #999;
  display: flex;
  justify-content: center;
  align-items: center;
}
.z-thumb {
  display: block;
  width: 5px;
  height: 14px;
  background: #666;
  flex: none;
}
.zoomval {
  margin-left: 15px;
  font-size: 14.670px;
  word-spacing: 1px;
  color: #555;
}
```
